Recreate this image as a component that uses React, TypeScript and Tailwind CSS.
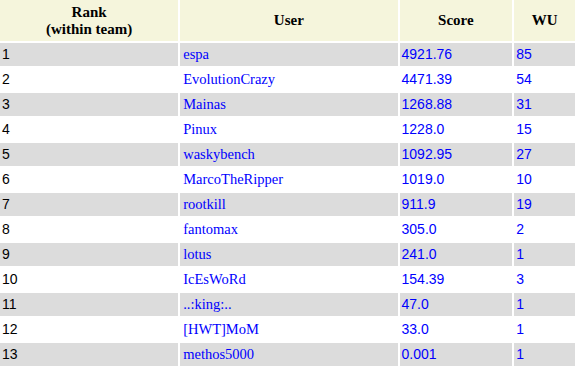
const ROWS: Array<{ rank: number; user: string; score: string; wu: number }> = [
  { rank: 1, user: 'espa', score: '4921.76', wu: 85 },
  { rank: 2, user: 'EvolutionCrazy', score: '4471.39', wu: 54 },
  { rank: 3, user: 'Mainas', score: '1268.88', wu: 31 },
  { rank: 4, user: 'Pinux', score: '1228.0', wu: 15 },
  { rank: 5, user: 'waskybench', score: '1092.95', wu: 27 },
  { rank: 6, user: 'MarcoTheRipper', score: '1019.0', wu: 10 },
  { rank: 7, user: 'rootkill', score: '911.9', wu: 19 },
  { rank: 8, user: 'fantomax', score: '305.0', wu: 2 },
  { rank: 9, user: 'lotus', score: '241.0', wu: 1 },
  { rank: 10, user: 'IcEsWoRd', score: '154.39', wu: 3 },
  { rank: 11, user: '..:king:..', score: '47.0', wu: 1 },
  { rank: 12, user: '[HWT]MoM', score: '33.0', wu: 1 },
  { rank: 13, user: 'methos5000', score: '0.001', wu: 1 },
]

// header + user names are serif, numbers are sans
const sans = "font-['Liberation_Sans',Arial,sans-serif]"

export default function App() {
  return (
    <div className="h-[371px] w-[577px] overflow-hidden bg-white font-['Liberation_Serif','Times_New_Roman',serif]">
      <table className="-ml-[2px] -mt-[2px] border-separate border-spacing-[2px] text-left">
        <thead>
          <tr className="h-[41px] bg-[#f5f5dc] text-[15px] font-bold text-black">
            <th className="w-[179px] p-0 text-center leading-[17px]">
              Rank
              <br />
              (within team)
            </th>
            <th className="w-[218px] p-0 text-center">User</th>
            <th className="w-[113px] p-0 text-center">Score</th>
            <th className="w-[61px] p-0 text-center">WU</th>
          </tr>
        </thead>
        <tbody>
          {ROWS.map((r, i) => (
            <tr key={r.rank} className={i % 2 === 0 ? 'h-[23px] bg-[#dcdcdc]' : 'h-[23px] bg-white'}>
              <td className={`px-[2px] py-0 text-[14px] text-black ${sans}`}>{r.rank}</td>
              <td className="px-[3px] py-0 text-[14.5px] text-[#0000ff]">{r.user}</td>
              <td className={`px-[2px] py-0 text-[14px] text-[#0000ff] ${sans}`}>{r.score}</td>
              <td className={`px-[2px] py-0 text-[14px] text-[#0000ff] ${sans}`}>{r.wu}</td>
            </tr>
          ))}
        </tbody>
      </table>
    </div>
  )
}
